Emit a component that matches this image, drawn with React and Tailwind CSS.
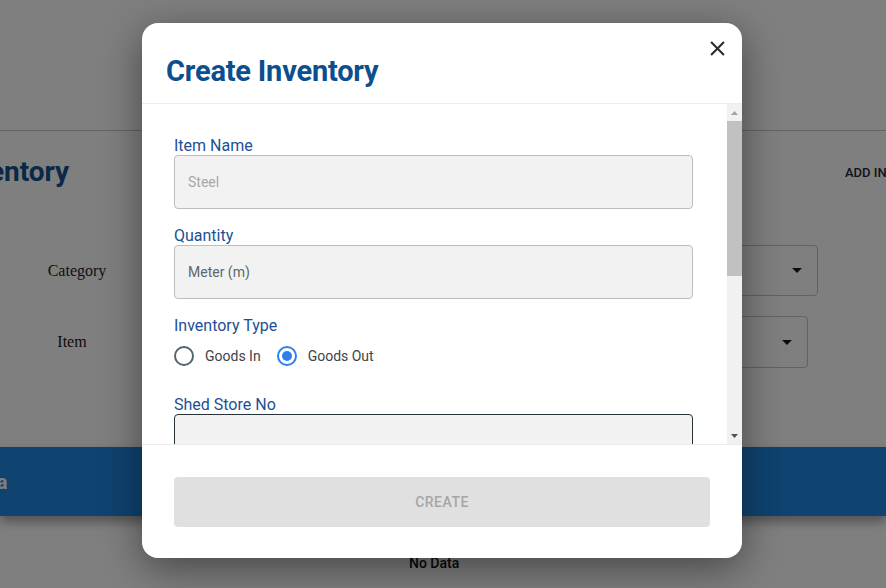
import React, { useState } from 'react'

const fieldBox = 'h-[54px] rounded-[4px] border bg-[#f2f2f2] flex items-center px-[13px]'
const labelCls = 'block text-[16px] leading-[19px] text-[#1d4f96]'

export default function App() {
  const [type, setType] = useState('out')

  return (
    <div className="relative w-[886px] h-[588px] overflow-hidden bg-white font-['Roboto',sans-serif]">
      {/* page behind the dialog */}
      <div className="h-[131px] border-b border-[#c8c8c8] bg-white" />
      <div className="flex items-center justify-between h-[82px]">
        <h1 className="ml-[-49px] text-[28px] font-bold text-[#14508e]">Inventory</h1>
        <div className="mr-[-58px] pt-[2px] text-[13px] font-medium text-[#1b2a38] uppercase">Add Inventory</div>
      </div>
      <div className="flex flex-col gap-[20px] pt-[32px]">
        <div className="flex items-center h-[51px]">
          <div className="w-[154px] text-center font-['Liberation_Serif',serif] text-[16px] text-[#222]">Category</div>
          <div className="ml-auto mr-[68px] w-[360px] h-[51px] rounded-[4px] border border-[#c4c4c4] flex items-center justify-end pr-[15px]">
            <svg width="10" height="5" viewBox="0 0 10 5"><path d="M0 0h10L5 5z" fill="#1b1b1b" /></svg>
          </div>
        </div>
        <div className="flex items-center h-[52px]">
          <div className="w-[144px] text-center font-['Liberation_Serif',serif] text-[16px] text-[#222]">Item</div>
          <div className="ml-auto mr-[78px] w-[360px] h-[52px] rounded-[4px] border border-[#c4c4c4] flex items-center justify-end pr-[15px]">
            <svg width="10" height="5" viewBox="0 0 10 5"><path d="M0 0h10L5 5z" fill="#1b1b1b" /></svg>
          </div>
        </div>
      </div>
      <div className="mt-[79px] h-[69px] bg-[#1e86e0] shadow-[0_6px_10px_rgba(0,0,0,0.35)] flex items-center">
        <span className="ml-[-64px] text-[20px] font-bold text-white">No Data</span>
      </div>
      <div className="pt-[37px] pl-[409px] text-[14px] font-medium text-[#111]">No Data</div>

      {/* overlay */}
      <div className="absolute inset-0 bg-black/50">
        <div className="absolute left-[142px] top-[23px] w-[600px] h-[535px] rounded-[16px] bg-white shadow-[0_10px_40px_rgba(0,0,0,0.45)] flex flex-col overflow-hidden">
          <div className="relative h-[81px] border-b border-[#ececec] flex items-end pl-[24px] pb-[15px] shrink-0">
            <h2 className="text-[29px] leading-[34px] font-bold text-[#0b4f8e] tracking-[-0.2px]">Create Inventory</h2>
            <button className="absolute right-[16px] top-[16px] w-[18px] h-[18px] flex items-center justify-center">
              <svg width="15" height="15" viewBox="0 0 14 14"><path d="M1 1l12 12M13 1L1 13" stroke="#2b2b2b" strokeWidth="1.9" /></svg>
            </button>
          </div>

          <div className="flex h-[340px] shrink-0">
            <div className="flex-1 overflow-hidden pl-[32px] pr-[34px] pt-[32px]">
              <label className={labelCls}>Item Name</label>
              <div className={`${fieldBox} border-[#bdbdbd] text-[14px] text-[#a8a8a8]`}>Steel</div>

              <label className={`${labelCls} mt-[17px]`}>Quantity</label>
              <div className={`${fieldBox} border-[#bdbdbd] text-[14px] text-[#5b6770]`}>Meter (m)</div>

              <label className={`${labelCls} mt-[17px]`}>Inventory Type</label>
              <div className="flex items-center mt-[10px] h-[22px] text-[14px] text-[#3c4348]">
                <button onClick={() => setType('in')} className="flex items-center">
                  <span className={`w-[20px] h-[20px] rounded-full border-2 flex items-center justify-center ${type === 'in' ? 'border-[#2d7ff0]' : 'border-[#4f6571]'}`}>
                    {type === 'in' && <span className="w-[10px] h-[10px] rounded-full bg-[#2d7ff0]" />}
                  </span>
                  <span className="ml-[11px]">Goods In</span>
                </button>
                <button onClick={() => setType('out')} className="flex items-center ml-[16px]">
                  <span className={`w-[20px] h-[20px] rounded-full border-2 flex items-center justify-center ${type === 'out' ? 'border-[#2d7ff0]' : 'border-[#4f6571]'}`}>
                    {type === 'out' && <span className="w-[10px] h-[10px] rounded-full bg-[#2d7ff0]" />}
                  </span>
                  <span className="ml-[11px]">Goods Out</span>
                </button>
              </div>

              <label className={`${labelCls} mt-[28px]`}>Shed Store No</label>
              <div className={`${fieldBox} border-[#263238]`} />
            </div>

            {/* scrollbar */}
            <div className="w-[15px] bg-[#f1f1f1] flex flex-col items-center">
              <div className="h-[17px] flex items-center justify-center">
                <svg width="7" height="4" viewBox="0 0 7 4"><path d="M0 4h7L3.5 0z" fill="#a3a3a3" /></svg>
              </div>
              <div className="flex-1 w-full">
                <div className="h-[155px] w-full bg-[#c1c1c1]" />
              </div>
              <div className="h-[17px] flex items-center justify-center">
                <svg width="7" height="4" viewBox="0 0 7 4"><path d="M0 0h7L3.5 4z" fill="#505050" /></svg>
              </div>
            </div>
          </div>

          <div className="flex-1 border-t border-[#ececec] px-[32px] pt-[32px]">
            <button disabled className="w-full h-[50px] rounded-[4px] bg-[#e0e0e0] text-[14px] font-medium tracking-[0.5px] text-[#a6a6a6]">CREATE</button>
          </div>
        </div>
      </div>
    </div>
  )
}
